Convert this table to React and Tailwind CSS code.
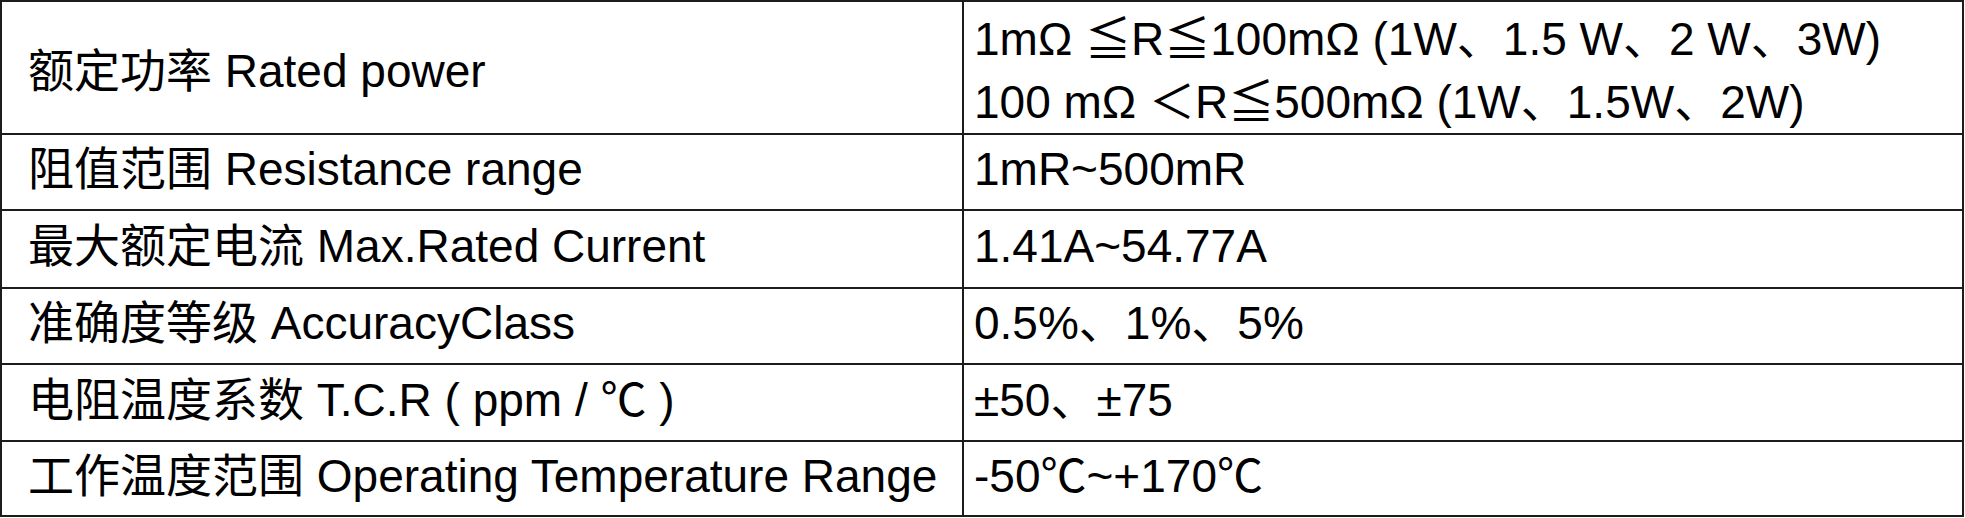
const rows = [
  {
    label: '额定功率 Rated power',
    values: ['1mΩ ≦R≦100mΩ (1W、1.5 W、2 W、3W)', '100 mΩ ＜R≦500mΩ (1W、1.5W、2W)'],
    height: 'h-[131px]',
  },
  { label: '阻值范围 Resistance range', values: ['1mR~500mR'], height: 'h-[76px]' },
  { label: '最大额定电流 Max.Rated Current', values: ['1.41A~54.77A'], height: 'h-[78px]' },
  { label: '准确度等级 AccuracyClass', values: ['0.5%、1%、5%'], height: 'h-[76px]' },
  { label: '电阻温度系数 T.C.R ( ppm / ℃ )', values: ['±50、±75'], height: 'h-[77px]' },
  { label: '工作温度范围 Operating Temperature Range', values: ['-50℃~+170℃'], height: 'h-[75px]' },
];

function SpecRow({ row, first }) {
  const multi = row.values.length > 1;
  return (
    <div className={`flex ${row.height} ${first ? '' : 'border-t-2 border-[#1c1c1c]'}`}>
      <div
        className={`flex w-[962px] shrink-0 items-center border-r-2 border-[#1c1c1c] pl-[26px] ${
          multi ? 'pt-[6px]' : 'pb-[6px]'
        }`}
      >
        <span className="whitespace-nowrap leading-[50px]">{row.label}</span>
      </div>
      <div
        className={`flex min-w-0 flex-1 flex-col pl-[10px] ${
          multi ? 'justify-start pt-[12px] gap-[13px]' : 'justify-center pb-[6px]'
        }`}
      >
        {row.values.map((value) => (
          <span key={value} className="whitespace-nowrap leading-[50px]">
            {value}
          </span>
        ))}
      </div>
    </div>
  );
}

export default function App() {
  return (
    <div className="h-[518px] w-[1965px] bg-white">
      <div
        className="w-[1964px] border-2 border-[#1c1c1c] text-[46px] text-black"
        style={{ fontFamily: '"Liberation Sans", "Noto Sans CJK SC", sans-serif' }}
      >
        {rows.map((row, index) => (
          <SpecRow key={row.label} row={row} first={index === 0} />
        ))}
      </div>
    </div>
  );
}
